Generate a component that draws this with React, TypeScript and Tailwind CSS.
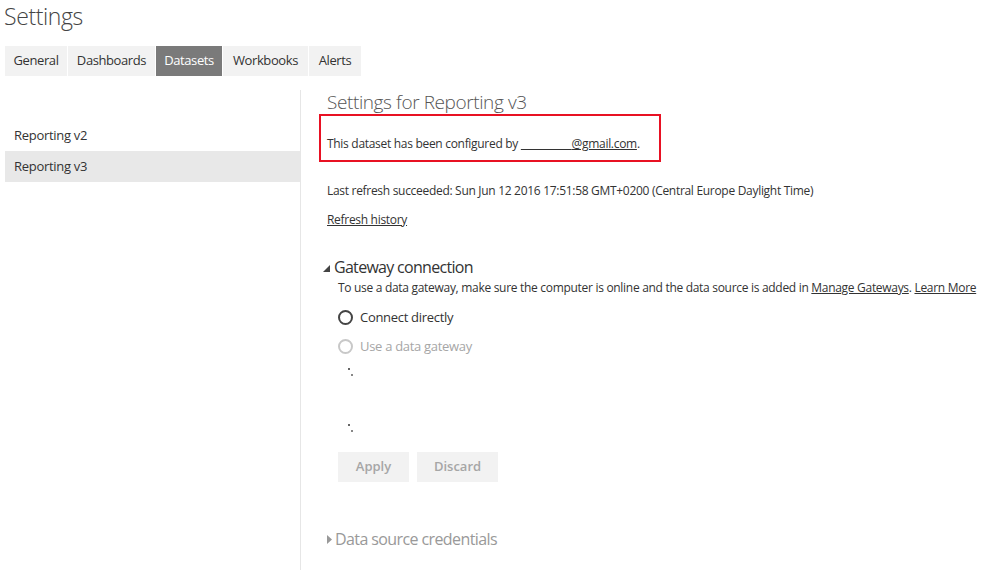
import React from "react";

const font = { fontFamily: '"Open Sans", "Noto Sans", sans-serif' };

export default function App() {
  const tabs: [string, string][] = [
    ["General", "w-[62px]"],
    ["Dashboards", "w-[87px]"],
    ["Datasets", "w-[66px]"],
    ["Workbooks", "w-[85px]"],
    ["Alerts", "w-[52px]"],
  ];
  return (
    <div className="w-[999px] h-[570px] bg-white text-[#333] overflow-hidden relative" style={font}>
      <div className="pl-[4px] pt-[0px] text-[23px] font-light leading-[32px] text-[#444] tracking-[-0.4px]">Settings</div>
      <div className="flex gap-[1px] ml-[5px] mt-[14px]">
        {tabs.map(([t, w]) => (
          <div
            key={t}
            className={
              t === "Datasets"
                ? `${w} h-[30px] flex items-center justify-center text-[13px] tracking-[-0.4px] bg-[#7a7a7a] text-white`
                : `${w} h-[30px] flex items-center justify-center text-[13px] tracking-[-0.4px] bg-[#f2f2f2] text-[#333]`
            }
          >
            {t}
          </div>
        ))}
      </div>
      <div className="flex mt-[14px]">
        <div className="w-[301px] pl-[5px] pt-[30px] border-r border-[#e6e6e6] h-[480px]">
          <div className="h-[31px] pl-[9px] flex items-center text-[13px] tracking-[-0.3px]">Reporting v2</div>
          <div className="h-[31px] pl-[9px] flex items-center text-[13px] tracking-[-0.3px] bg-[#e8e8e8]">Reporting v3</div>
        </div>
        <div className="flex-1 pl-[18px] pt-[0px]">
          <div className="pl-[8px] text-[19px] font-light leading-[24px] text-[#555] tracking-[-0.4px]">Settings for Reporting v3</div>
          <div className="w-[342px] h-[48px] border-2 border-[#e81123] flex items-center pl-[6px] pt-[12px] text-[12px] tracking-[-0.3px]">
            <span>This dataset has been configured by&nbsp;</span>
            <span className="underline">
              {"\u00a0".repeat(18)}@gmail.com
            </span>
            <span>.</span>
          </div>
          <div className="pl-[8px] mt-[21px] text-[12px] leading-[16px] tracking-[-0.3px]">
            Last refresh succeeded: Sun Jun 12 2016 17:51:58 GMT+0200 (Central Europe Daylight Time)
          </div>
          <div className="pl-[8px] mt-[13px] text-[12px] leading-[16px] underline tracking-[-0.3px]">Refresh history</div>
          <div className="flex items-center mt-[29px] pl-[4px]">
            <svg width="8" height="8" viewBox="0 0 8 8" className="mr-[3px] mt-[3px]">
              <polygon points="7,0 7,7 0,7" fill="#444" />
            </svg>
            <span className="text-[16px] leading-[20px] text-[#333] tracking-[-0.7px]">Gateway connection</span>
          </div>
          <div className="pl-[19px] mt-[3px] text-[12px] leading-[16px] tracking-[-0.3px]">
            To use a data gateway, make sure the computer is online and the data source is added in{" "}
            <span className="underline">Manage Gateways</span>. <span className="underline">Learn More</span>
          </div>
          <div className="pl-[19px] mt-[12px] flex items-center text-[13px] tracking-[-0.3px]">
            <span className="w-[15px] h-[15px] rounded-full border-2 border-[#444] mr-[7px]"></span>
            Connect directly
          </div>
          <div className="pl-[19px] mt-[9px] flex items-center text-[13px] text-[#a6a6a6] tracking-[-0.3px]">
            <span className="w-[15px] h-[15px] rounded-full border-2 border-[#c8c8c8] mr-[7px]"></span>
            Use a data gateway
          </div>
          <div className="pl-[29px] mt-[12px] h-[12px] relative">
            <span className="absolute left-[29px] top-[0px] w-[2px] h-[2px] bg-[#666]"></span>
            <span className="absolute left-[32px] top-[6px] w-[2px] h-[2px] bg-[#888]"></span>
          </div>
          <div className="pl-[29px] mt-[44px] h-[12px] relative">
            <span className="absolute left-[29px] top-[0px] w-[2px] h-[2px] bg-[#666]"></span>
            <span className="absolute left-[32px] top-[6px] w-[2px] h-[2px] bg-[#888]"></span>
          </div>
          <div className="pl-[19px] mt-[16px] flex gap-[8px]">
            <div className="w-[71px] h-[30px] bg-[#f2f2f2] text-[#a6a6a6] text-[13px] font-semibold flex items-center justify-center">Apply</div>
            <div className="w-[81px] h-[30px] bg-[#f2f2f2] text-[#a6a6a6] text-[13px] font-semibold flex items-center justify-center">Discard</div>
          </div>
          <div className="flex items-center mt-[47px] pl-[8px]">
            <svg width="5" height="9" viewBox="0 0 5 9" className="mr-[3px]">
              <polygon points="0,0 5,4.5 0,9" fill="#999" />
            </svg>
            <span className="text-[16px] leading-[20px] text-[#999] tracking-[-0.6px]">Data source credentials</span>
          </div>
        </div>
      </div>
    </div>
  );
}
